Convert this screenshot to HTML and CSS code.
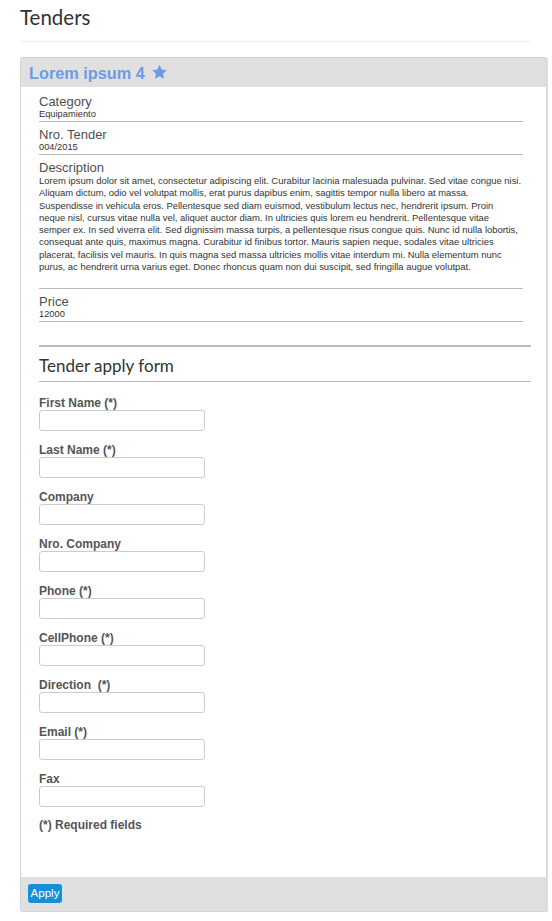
FILE: index.html
```html
<!DOCTYPE html>
<html lang="es">
<head>
<meta charset="utf-8">
<title>Tenders</title>
<link rel="stylesheet" href="styles.css">
</head>
<body>
<div class="page">
  <div class="page-header">
    <h1 class="page-title">Tenders</h1>
  </div>

  <div class="panel">
    <div class="panel-heading">
      <h2 class="panel-title">Lorem ipsum 4</h2>
      <svg class="star" viewBox="0 0 24 24" width="17" height="16" aria-hidden="true">
        <path d="M12 1.2l3.3 7.1 7.7.9-5.7 5.3 1.5 7.7L12 18.4l-6.8 3.8 1.5-7.7L1 9.2l7.7-.9z" fill="#6d9be8"/>
      </svg>
    </div>

    <div class="panel-body">
      <div class="details">
        <div class="detail">
          <div class="detail-label">Category</div>
          <div class="detail-value">Equipamiento</div>
        </div>
        <div class="detail">
          <div class="detail-label">Nro. Tender</div>
          <div class="detail-value">004/2015</div>
        </div>
        <div class="detail">
          <div class="detail-label">Description</div>
          <div class="detail-value detail-text">Lorem ipsum dolor sit amet, consectetur adipiscing elit. Curabitur lacinia malesuada pulvinar. Sed vitae congue nisi.<br>Aliquam dictum, odio vel volutpat mollis, erat purus dapibus enim, sagittis tempor nulla libero at massa.<br>Suspendisse in vehicula eros. Pellentesque sed diam euismod, vestibulum lectus nec, hendrerit ipsum. Proin<br>neque nisl, cursus vitae nulla vel, aliquet auctor diam. In ultricies quis lorem eu hendrerit. Pellentesque vitae<br>semper ex. In sed viverra elit. Sed dignissim massa turpis, a pellentesque risus congue quis. Nunc id nulla lobortis,<br>consequat ante quis, maximus magna. Curabitur id finibus tortor. Mauris sapien neque, sodales vitae ultricies<br>placerat, facilisis vel mauris. In quis magna sed massa ultricies mollis vitae interdum mi. Nulla elementum nunc<br>purus, ac hendrerit urna varius eget. Donec rhoncus quam non dui suscipit, sed fringilla augue volutpat.</div>
        </div>
        <div class="detail">
          <div class="detail-label">Price</div>
          <div class="detail-value">12000</div>
        </div>
      </div>

      <form class="apply-form" id="apply-form">
        <h3 class="form-title">Tender apply form</h3>
        <div class="field">
          <label class="field-label" for="f1">First Name (*)</label>
          <input class="field-input" id="f1" type="text">
        </div>
        <div class="field">
          <label class="field-label" for="f2">Last Name (*)</label>
          <input class="field-input" id="f2" type="text">
        </div>
        <div class="field">
          <label class="field-label" for="f3">Company</label>
          <input class="field-input" id="f3" type="text">
        </div>
        <div class="field">
          <label class="field-label" for="f4">Nro. Company</label>
          <input class="field-input" id="f4" type="text">
        </div>
        <div class="field">
          <label class="field-label" for="f5">Phone (*)</label>
          <input class="field-input" id="f5" type="text">
        </div>
        <div class="field">
          <label class="field-label" for="f6">CellPhone (*)</label>
          <input class="field-input" id="f6" type="text">
        </div>
        <div class="field">
          <label class="field-label" for="f7">Direction&nbsp; (*)</label>
          <input class="field-input" id="f7" type="text">
        </div>
        <div class="field">
          <label class="field-label" for="f8">Email (*)</label>
          <input class="field-input" id="f8" type="text">
        </div>
        <div class="field">
          <label class="field-label" for="f9">Fax</label>
          <input class="field-input" id="f9" type="text">
        </div>
        <p class="required-note">(*) Required fields</p>
      </form>
    </div>

    <div class="panel-footer">
      <button class="btn-apply" type="submit" form="apply-form">Apply</button>
    </div>
  </div>
</div>
</body>
</html>
```

FILE: styles.css
```css
html, body {
  margin: 0;
  padding: 0;
  background: #fff;
}

body {
  font-family: "Liberation Sans", Arial, sans-serif;
  color: #333;
}

.page {
  padding: 0 5px 0 20px;
}

.page-header {
  margin-right: 17px;
  border-bottom: 1px solid #eee;
  height: 41px;
}

.page-title {
  margin: 0;
  padding-top: 3px;
  font-family: Lato, "Open Sans", sans-serif;
  font-weight: 400;
  font-size: 20.5px;
  line-height: 28px;
  color: #333;
}

.panel {
  margin-top: 15px;
  border: 1px solid #d4d4d4;
  border-radius: 2px;
  box-shadow: 1px 1px 1px rgba(0, 0, 0, 0.12);
  background: #fff;
}

.panel-heading {
  display: flex;
  align-items: center;
  gap: 6px;
  height: 29px;
  padding-left: 8px;
  background: #e0e0e0;
}

.panel-title {
  margin: 0;
  font-size: 16.3px;
  font-weight: 700;
  line-height: 20px;
  color: #6d9be8;
}

.star {
  display: block;
  margin-top: -2px;
}

.panel-body {
  padding: 7px 15px 45px 18px;
}

.details {
  margin-right: 8px;
}

.detail {
  margin-top: 5px;
  border-bottom: 1px solid #bbb;
  padding-bottom: 1px;
}

.detail:first-child {
  margin-top: 0;
}

.detail-label {
  font-size: 13px;
  line-height: 15px;
  color: #4f4f4f;
}

.detail-value {
  font-size: 9.3px;
  line-height: 11px;
  color: #333;
}

.detail-text {
  font-size: 9.45px;
  line-height: 12.3px;
  padding-bottom: 14px;
  white-space: nowrap;
}

.apply-form {
  margin-top: 23px;
  border-top: 2px solid #bbb;
}

.form-title {
  margin: 0;
  padding-top: 9px;
  height: 25px;
  border-bottom: 1px solid #bbb;
  font-family: Lato, "Open Sans", sans-serif;
  font-weight: 400;
  font-size: 17px;
  line-height: 20px;
  color: #333;
}

.field {
  display: flex;
  flex-direction: column;
  align-items: flex-start;
  margin-top: 12px;
}

.field:first-of-type {
  margin-top: 14px;
}

.field-label {
  font-size: 12px;
  font-weight: 700;
  line-height: 14px;
  color: #555;
}

.field-input {
  box-sizing: border-box;
  width: 166px;
  height: 21px;
  margin: 0;
  padding: 2px 4px;
  border: 1px solid #ccc;
  border-radius: 3px;
  background: #fff;
  font-family: "Liberation Sans", Arial, sans-serif;
  font-size: 12px;
}

.required-note {
  margin: 11px 0 0;
  font-size: 12px;
  font-weight: 700;
  line-height: 14px;
  color: #555;
}

.panel-footer {
  height: 34px;
  padding: 7px 0 0 7px;
  box-sizing: border-box;
  background: #e0e0e0;
}

.btn-apply {
  display: block;
  width: 34px;
  height: 19px;
  padding: 0;
  border: 0;
  border-radius: 3px;
  background: #1490d9;
  color: #fff;
  font-family: "Liberation Sans", Arial, sans-serif;
  font-size: 11.5px;
  line-height: 19px;
  text-align: center;
}
```
